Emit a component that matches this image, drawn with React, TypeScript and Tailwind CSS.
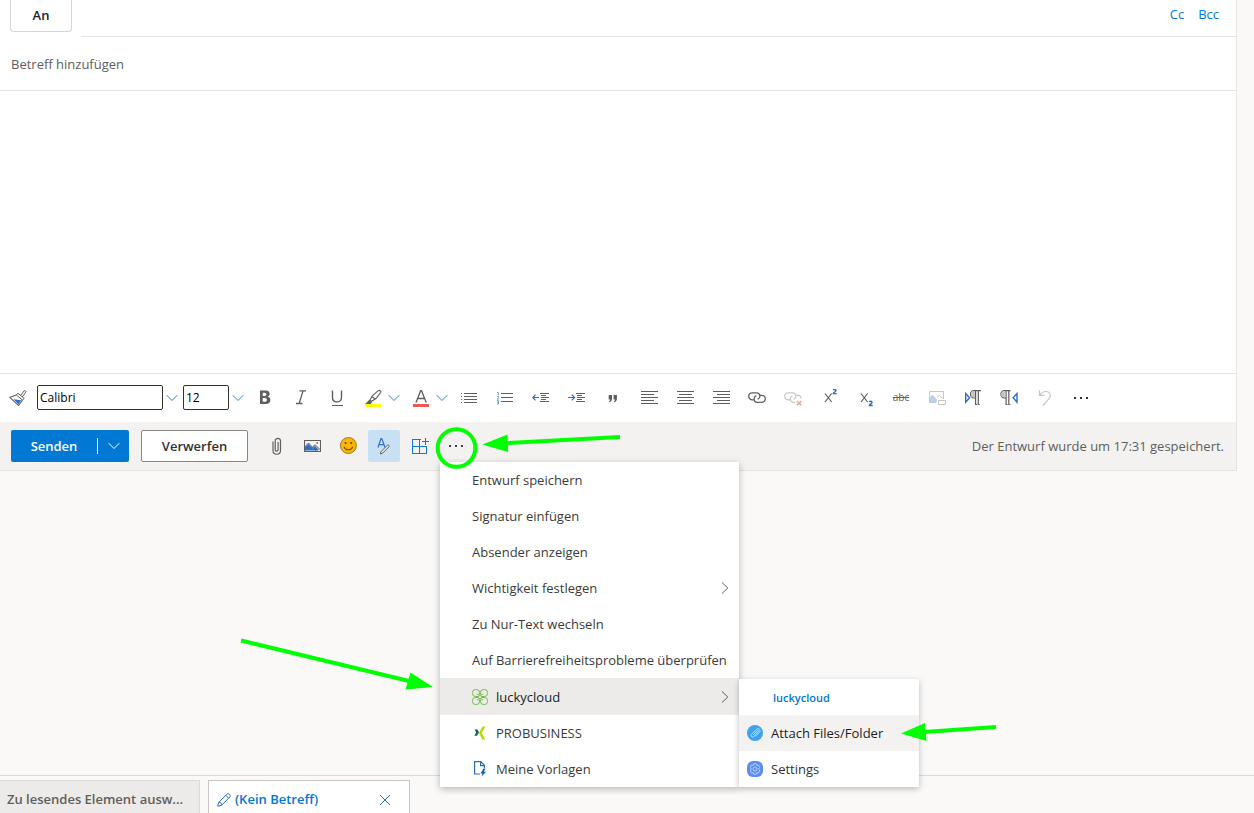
import { ReactNode, useState } from "react";

interface IconProps {
  children: ReactNode;
  size?: string;
  box?: string;
}

function Icon({ children, size = "h-[18px] w-[18px]", box = "0 0 18 18" }: IconProps) {
  return (
    <svg
      viewBox={box}
      className={`${size} shrink-0`}
      fill="none"
      stroke="#605e5c"
      strokeWidth="1"
      aria-hidden="true"
    >
      {children}
    </svg>
  );
}

const blue = "#2b6fc9";

function ChevronDown({ color = "#2b7cd3" }: { color?: string }) {
  return (
    <Icon size="h-3 w-3" box="0 0 12 12">
      <path d="M.7 3.2 6 8.5l5.3-5.3" stroke={color} />
    </Icon>
  );
}

function ChevronRight() {
  return (
    <Icon size="h-3 w-2" box="0 0 8 12">
      <path d="M1 .5 6.8 6 1 11.5" />
    </Icon>
  );
}

function ToolButton({ label, children }: { label: string; children: ReactNode }) {
  return (
    <button
      type="button"
      aria-label={label}
      className="flex h-9 w-9 shrink-0 items-center justify-center hover:bg-[#f3f2f1]"
    >
      {children}
    </button>
  );
}

function SplitTool({ label, children }: { label: string; children: ReactNode }) {
  return (
    <div className="flex w-12 shrink-0 items-center">
      <button type="button" aria-label={label} className="flex h-9 items-center pr-1.5 pl-[9px]">
        {children}
      </button>
      <button type="button" aria-label={`${label}: Optionen`} className="flex h-9 items-center">
        <ChevronDown />
      </button>
    </div>
  );
}

interface ComboProps {
  label: string;
  initial: string;
  width: string;
}

function Combo({ label, initial, width }: ComboProps) {
  const [value, setValue] = useState(initial);
  return (
    <div className="flex shrink-0 items-center">
      <input
        type="text"
        aria-label={label}
        value={value}
        onChange={(e) => setValue(e.target.value)}
        className={`${width} h-[25px] rounded-xs border border-[#323130] px-0.5 text-[12px] text-black outline-none`}
      />
      <button
        type="button"
        aria-label={`${label} auswählen`}
        className="flex h-6 w-5 items-center pl-[3px]"
      >
        <ChevronDown />
      </button>
    </div>
  );
}

const tools: { label: string; icon: ReactNode }[] = [
  {
    label: "Aufzählungszeichen",
    icon: (
      <Icon>
        <path d="M4 4.5h13M4 7.5h13M4 10.5h13M4 13.5h13" shapeRendering="crispEdges" />
        <path d="M1 4.5h1M1 7.5h1M1 10.5h1M1 13.5h1" stroke={blue} shapeRendering="crispEdges" />
      </Icon>
    ),
  },
  {
    label: "Nummerierung",
    icon: (
      <Icon>
        <path d="M5 4.5h12M5 8.5h12M5 12.5h12" shapeRendering="crispEdges" />
        <path
          d="M1 3.5h1.3v3M1 7.5h1.5v1L1 10h2M1 11.5h1.5v3.5H1M1 13.2h1.5"
          stroke="#5b97dc"
          strokeWidth=".9"
        />
      </Icon>
    ),
  },
  {
    label: "Einzug verkleinern",
    icon: (
      <Icon>
        <path d="M8 4.5h9M9 6.5h5M9 8.5h8M9 10.5h5M8 12.5h9" shapeRendering="crispEdges" />
        <path d="M.8 8.5H7M3.5 5.7.8 8.5l2.700 2.800" stroke={blue} strokeWidth="1.2" />
      </Icon>
    ),
  },
  {
    label: "Einzug vergrößern",
    icon: (
      <Icon>
        <path d="M8 4.5h9M9 6.5h5M9 8.5h8M9 10.5h5M8 12.5h9" shapeRendering="crispEdges" />
        <path d="M0 8.5h6.5M3.8 5.7l2.7 2.8-2.7 2.8" stroke={blue} strokeWidth="1.2" />
      </Icon>
    ),
  },
  {
    label: "Zitat",
    icon: (
      <Icon>
        <path
          d="M4.700 6H8v3.400c0 1.900-.9 3.300-2.500 3.800l-.5-1c.8-.3 1.100-.9 1.100-1.800H4.700zM9.600 6h3.300v3.400c0 1.900-.9 3.300-2.500 3.800l-.5-1c.8-.3 1.100-.9 1.100-1.800H9.600z"
          fill="#605e5c"
          stroke="none"
        />
      </Icon>
    ),
  },
  {
    label: "Linksbündig",
    icon: (
      <Icon>
        <path d="M1 2.5h17M1 5.5h13M1 8.5h17M1 11.5h13M1 14.5h17" shapeRendering="crispEdges" />
      </Icon>
    ),
  },
  {
    label: "Zentriert",
    icon: (
      <Icon>
        <path d="M1 2.5h17M3 5.5h13M1 8.5h17M3 11.5h13M1 14.5h17" shapeRendering="crispEdges" />
      </Icon>
    ),
  },
  {
    label: "Rechtsbündig",
    icon: (
      <Icon>
        <path d="M1 2.5h17M5 5.5h13M1 8.5h17M5 11.5h13M1 14.5h17" shapeRendering="crispEdges" />
      </Icon>
    ),
  },
  {
    label: "Link einfügen",
    icon: (
      <Icon>
        <path
          d="M6 10.8H4.2a3.5 3.5 0 0 1 0-7h4.3a3.4 3.4 0 0 1 3.4 3.4c0 1.6-1 2.6-2.3 3.2M12 6.3h1.8a3.5 3.5 0 0 1 0 7H9.5a3.4 3.4 0 0 1-3.4-3.4c0-1.6 1-2.6 2.3-3.2"
          strokeWidth="1.3"
        />
      </Icon>
    ),
  },
  {
    label: "Link entfernen",
    icon: (
      <Icon>
        <path
          d="M6 10.8H4.2a3.5 3.5 0 0 1 0-7h4.3a3.4 3.4 0 0 1 3.4 3.4c0 1.6-1 2.6-2.3 3.2M12 6.3h1.8a3.3 3.3 0 0 1 3.3 3.3M11 13.3H9.5a3.4 3.4 0 0 1-3.4-3.4c0-1.6 1-2.6 2.3-3.2"
          stroke="#c8c6c4"
          strokeWidth="1.2"
        />
        <path d="m13 12 4.3 4.3M17.3 12 13 16.3" stroke="#f0a79e" strokeWidth="1.6" />
      </Icon>
    ),
  },
  {
    label: "Hochgestellt",
    icon: (
      <Icon>
        <path d="m5 4.500 6.600 8.500M11.600 4.500 5 13" strokeWidth="1.2" />
        <path d="M13.300 1.200c.5-1 2.700-1 2.700.400 0 1.200-2.500 1.600-2.700 3h3.400" stroke={blue} strokeWidth="1.4" />
      </Icon>
    ),
  },
  {
    label: "Tiefgestellt",
    icon: (
      <Icon>
        <path d="m5 4.500 6.600 8.500M11.600 4.500 5 13" strokeWidth="1.2" />
        <path
          d="M13.300 13c.5-1 2.700-1 2.700.400 0 1.200-2.500 1.700-2.700 3.100h3.400"
          stroke={blue}
          strokeWidth="1.4"
        />
      </Icon>
    ),
  },
  {
    label: "Durchgestrichen",
    icon: <span className="text-[10px] text-[#605e5c] line-through">abc</span>,
  },
  {
    label: "Alternativtext",
    icon: (
      <Icon>
        <path d="M8 13.5H1.5v-11h14V10" stroke="#c8c6c4" />
        <path d="M2 12V9l2.3-2.8L9 11.3V13H2z" fill="#b4d3f2" stroke="none" />
        <path d="m2 8.7 2.3-2.6 4.4 4.6M9 8.5l2.3-2 3.7 3.3" stroke="#c8c6c4" />
        <path d="M10.5 11.5h7v4h-7z" fill="#fff" stroke="#c8c6c4" />
      </Icon>
    ),
  },
  {
    label: "Links nach rechts",
    icon: (
      <Icon>
        <path d="M1.7 4.5v8.6L5.6 8.8z" stroke={blue} strokeWidth="1.4" />
        <path d="M17 1.6H10a3.6 3.6 0 0 0 0 7.200h1.5M11.6 1.6V15.5h1.5M14.3 1.6V15.5h1.5" strokeWidth="1.2" />
        <path d="M11 2H10a3.2 3.2 0 0 0 0 6.400h1z" fill="#c8c6c4" stroke="none" />
      </Icon>
    ),
  },
  {
    label: "Rechts nach links",
    icon: (
      <Icon>
        <path d="M17 4.5v8.6L13.1 8.8z" stroke={blue} strokeWidth="1.4" />
        <path d="M10.500 1.6H4.5a3.6 3.6 0 0 0 0 7.200H6M6.1 1.6V15.5h1.5M8.8 1.6V15.5h1.5" strokeWidth="1.2" />
        <path d="M5.500 2H4.5a3.2 3.2 0 0 0 0 6.400h1z" fill="#c8c6c4" stroke="none" />
      </Icon>
    ),
  },
  {
    label: "Rückgängig",
    icon: (
      <Icon>
        <path
          d="M3.5 1.5v4.800h5M3.7 6.2C5.8 3.4 8 2.3 10.5 2.5c3.4.3 5 3.8 3 6.700L7 16.5"
          stroke="#c8c6c4"
          strokeWidth="1.2"
        />
      </Icon>
    ),
  },
  {
    label: "Weitere Formatierungsoptionen",
    icon: (
      <Icon>
        <path
          d="M2 8h2v2H2zM8 8h2v2H8zM14 8h2v2h-2z"
          fill="#323130"
          stroke="none"
          shapeRendering="crispEdges"
        />
      </Icon>
    ),
  },
];

function FormatBar() {
  return (
    <div
      role="toolbar"
      aria-label="Formatierung"
      className="flex h-[49px] items-center overflow-hidden border-t border-[#e6e4e2] pb-px"
    >
      <button
        type="button"
        aria-label="Format übertragen"
        className="flex h-9 w-[37px] shrink-0 items-center pl-[9px]"
      >
        <Icon>
          <path d="m11.5 6.5 3.7-4.7c.6-.7 2.3.4 1.7 1.3L13.3 7.9" />
          <path d="m8.8 4.2 6.3 5.2-1.6 1.8-6.2-5.3z" />
          <path d="m7.3 6-6.5 2.3 8.700 8.200 4-5.300" strokeWidth="1.1" />
          <path d="m4.5 10.3 7.700 1-2.700 4z" fill={blue} stroke="none" />
        </Icon>
      </button>
      <Combo label="Schriftart" initial="Calibri" width="w-[126px]" />
      <Combo label="Schriftgrad" initial="12" width="w-[46px]" />
      <div className="-ml-0.5 flex items-center">
        <ToolButton label="Fett">
          <Icon>
            <path
              d="M4 1.500h5.700c2.700 0 4 1.300 4 3.300 0 1.400-.8 2.400-2 2.900 1.700.4 2.700 1.500 2.700 3.200 0 2.500-1.800 4.100-4.700 4.100H4z"
              strokeWidth="0"
              fill="#605e5c"
            />
            <path
              d="M6.700 3.700h1.800c2.600 0 2.600 3.200 0 3.200H6.700zM6.700 9h2.100c2.800 0 2.800 3.800 0 3.800H6.700z"
              fill="#fff"
              stroke="none"
            />
          </Icon>
        </ToolButton>
        <ToolButton label="Kursiv">
          <Icon>
            <path d="M7.500 1.900h6.500M4 14.500h6.500M11 1.900 7.200 14.500" strokeWidth="1.3" />
          </Icon>
        </ToolButton>
        <ToolButton label="Unterstrichen">
          <Icon>
            <path d="M4.500 1.500v7c0 5.800 9 5.800 9 0v-7" strokeWidth="1.4" />
            <path d="M4 16.500h11" shapeRendering="crispEdges" />
          </Icon>
        </ToolButton>
        <SplitTool label="Texthervorhebung">
          <Icon>
            <path d="M1 15h16v3H1z" fill="#ffff00" stroke="none" />
            <path
              d="M14.3 1.7 8.5 6.5 6 11l1.5 1.3L12 9.5l4.8-6.2c.6-1-1.4-2.5-2.5-1.6zM8 7.5l3.5 2.7M6 11l-3.5 3.5h4l1.2-2"
              strokeWidth="1.1"
            />
            <path d="m5.5 11.5-3 3h3.800l1-1.800z" fill="#605e5c" stroke="none" />
          </Icon>
        </SplitTool>
        <SplitTool label="Schriftfarbe">
          <Icon>
            <path d="M1 15h16v3H1z" fill="#ee5a52" stroke="none" />
            <path d="M4 13.5 8.7 1.7h.8l4.700 11.800M5.500 9.500h7.200" strokeWidth="1.3" />
          </Icon>
        </SplitTool>
        {tools.map((tool) => (
          <ToolButton key={tool.label} label={tool.label}>
            {tool.icon}
          </ToolButton>
        ))}
      </div>
    </div>
  );
}

function CloverIcon() {
  return (
    <Icon size="h-4 w-4" box="0 0 16 16">
      <g stroke="#6cbb45" strokeWidth="1">
        <path d="M6 7.500H3.500a3 3 0 0 1-3-3v-1a3 3 0 0 1 3-3h1a3 3 0 0 1 3 3V5c0 1.300-2.300 1.300-2.300-.3M6 7.500c1 0 1.500-.500 1.500-1.500" />
        <path d="M10 7.500h2.500a3 3 0 0 0 3-3v-1a3 3 0 0 0-3-3h-1a3 3 0 0 0-3 3V5c0 1.300 2.300 1.300 2.300-.3M10 7.500c-1 0-1.500-.500-1.500-1.500" />
        <path d="M6 8.500H3.500a3 3 0 0 0-3 3v1a3 3 0 0 0 3 3h1a3 3 0 0 0 3-3V11c0-1.300-2.300-1.300-2.300.3M6 8.500c1 0 1.500.500 1.500 1.500" />
        <path d="M10 8.500h2.500a3 3 0 0 1 3 3v1a3 3 0 0 1-3 3h-1a3 3 0 0 1-3-3V11c0-1.300 2.300-1.300 2.300.3M10 8.500c-1 0-1.500.500-1.500 1.500" />
      </g>
    </Icon>
  );
}

function XingIcon() {
  return (
    <Icon size="h-4 w-4" box="0 0 16 16">
      <path d="M2.600 4.500h2.800L7 7.400 4.900 10.800H2.300l2-3.400z" fill="#006567" stroke="none" />
      <path d="M10.600 1.500h2.800L9.800 8l3.300 6.400h-2.800L7 8z" fill="#b7d900" stroke="none" />
    </Icon>
  );
}

function TemplateIcon() {
  return (
    <Icon size="h-4 w-4" box="0 0 16 16">
      <path d="M8 13H2.600V.7h6.200L12.400 4.300V7M8.600.7V4.600h3.800" stroke="#2b6cb0" strokeWidth="1.2" />
      <path d="m11.500 7.500-3 5h2l-1.200 3.300 4.800-5h-2.300l1.700-3.300z" fill="#1160ad" stroke="none" />
    </Icon>
  );
}

function AttachIcon() {
  return (
    <Icon size="h-4 w-4" box="0 0 16 16">
      <circle cx="8" cy="8" r="8" fill="#3fa2ee" stroke="none" />
      <path
        d="m6.300 9.800 3.900-4c.9-.8 1.900.3 1.100 1.100l-4.400 4.500c-1.700 1.600-3.900-.5-2.300-2.200l4.700-4.700c2.300-2.200 5.100.6 3 2.800l-4.100 4.200"
        stroke="#c9e4fb"
        strokeWidth=".9"
      />
    </Icon>
  );
}

function SettingsIcon() {
  return (
    <Icon size="h-4 w-4" box="0 0 16 16">
      <rect width="16" height="16" rx="6" fill="#5c8df6" stroke="none" />
      <g stroke="#c3d5fd" strokeWidth=".9">
        <path d="M6.700 2.800h2.600l.5 1.500 1.600-.3 1.300 2.200L11.700 8l1 1.800-1.300 2.200-1.600-.3-.5 1.500H6.700l-.5-1.500-1.600.3-1.300-2.200L4.300 8l-1-1.800L4.600 4l1.600.3z" />
        <circle cx="8" cy="8" r="2" />
      </g>
    </Icon>
  );
}

const plainItems = [
  { label: "Entwurf speichern" },
  { label: "Signatur einfügen" },
  { label: "Absender anzeigen" },
  { label: "Wichtigkeit festlegen", submenu: true },
  { label: "Zu Nur-Text wechseln" },
  { label: "Auf Barrierefreiheitsprobleme überprüfen" },
];

const addInItems = [
  { label: "PROBUSINESS", icon: <XingIcon /> },
  { label: "Meine Vorlagen", icon: <TemplateIcon /> },
];

function LuckycloudMenu() {
  return (
    <ul className="absolute top-px left-full w-[180px] bg-white text-[#201f1e] shadow-[0_2px_6px_rgba(0,0,0,0.25)]">
      <li className="flex h-9 items-center pt-0.5 pl-[34px] text-[11px] font-semibold text-[#0078d4]">
        luckycloud
      </li>
      <li>
        <button type="button" className="flex h-9 w-full items-center gap-2 bg-[#f3f2f1] px-2">
          <AttachIcon />
          <span className="pt-0.5">Attach Files/Folder</span>
        </button>
      </li>
      <li>
        <button type="button" className="flex h-9 w-full items-center gap-2 px-2 text-[#323130]">
          <SettingsIcon />
          <span className="pt-0.5">Settings</span>
        </button>
      </li>
    </ul>
  );
}

function MoreMenu() {
  return (
    <ul className="absolute top-full left-0 z-10 w-[299px] bg-white text-[13px] text-[#3b3a39] shadow-[0_2px_7px_rgba(0,0,0,0.28)]">
      {plainItems.map((item) => (
        <li key={item.label}>
          <button
            type="button"
            className="flex h-9 w-full items-center justify-between pr-2.5 pl-8 whitespace-nowrap hover:bg-[#f3f2f1]"
          >
            <span className="pt-0.5">{item.label}</span>
            {item.submenu && <ChevronRight />}
          </button>
        </li>
      ))}
      <li className="relative">
        <button
          type="button"
          aria-expanded="true"
          className="flex h-[37px] w-full items-center gap-2 bg-[#edebe9] pr-2.5 pl-8 text-[#201f1e]"
        >
          <CloverIcon />
          <span className="flex-1 pt-0.5 text-left">luckycloud</span>
          <ChevronRight />
        </button>
        <LuckycloudMenu />
      </li>
      {addInItems.map((item) => (
        <li key={item.label}>
          <button
            type="button"
            className="flex h-9 w-full items-center gap-2 pr-2.5 pl-8 hover:bg-[#f3f2f1]"
          >
            {item.icon}
            <span className="pt-0.5">{item.label}</span>
          </button>
        </li>
      ))}
    </ul>
  );
}

const square = "flex h-8 w-8 shrink-0 items-center justify-center";

function SendBar() {
  return (
    <div className="flex h-12 items-center bg-[#f3f2f1] pr-3 pl-[11px]">
      <div className="flex h-8 items-center rounded-xs bg-[#0078d4] font-semibold text-white">
        <button type="button" className="h-8 w-[86px] pt-0.5">
          Senden
        </button>
        <span className="h-4 w-px bg-white" />
        <button
          type="button"
          aria-label="Sendeoptionen"
          className="flex h-8 w-[31px] items-center justify-center"
        >
          <ChevronDown color="#fff" />
        </button>
      </div>
      <button
        type="button"
        className="ml-3 h-8 w-[107px] rounded-xs border border-[#8a8886] bg-white pt-0.5 font-semibold text-[#323130]"
      >
        Verwerfen
      </button>
      <div className="ml-3 flex gap-1">
        <button type="button" aria-label="Anfügen" className={square}>
          <Icon>
            <path
              d="M6 4.500v9c0 5 7.500 5 7.500 0V4c0-3.600-5.300-3.600-5.300 0v8.800c0 1.700 2.900 1.700 2.900 0V5"
              strokeWidth="1.2"
            />
          </Icon>
        </button>
        <button type="button" aria-label="Bild einfügen" className={square}>
          <Icon>
            <path d="M2 13.500V10l3.500-3 6.500 6.500z" fill={blue} stroke="none" />
            <path d="m12 13.500-2-3.500 2-1 3.500 3.500v1z" fill={blue} stroke="none" />
            <path d="M1.500 3.500h16v11h-16z" shapeRendering="crispEdges" />
            <path d="m1.500 10 4-4L13 14M9.500 10l2.500-2.200 5 4.700" />
            <path d="M13.500 6h1.500" strokeWidth="1.3" />
          </Icon>
        </button>
        <button type="button" aria-label="Emoji einfügen" className={square}>
          <Icon>
            <circle cx="9.400" cy="8.500" r="8" fill="#fcb400" stroke="#a17a2a" />
            <circle cx="6.600" cy="6" r="1.100" fill="#5f4b1d" stroke="none" />
            <circle cx="12.200" cy="6" r="1.100" fill="#5f4b1d" stroke="none" />
            <path d="M5 9.800c1.500 4 7.300 4 8.800 0" stroke="#6f571d" strokeWidth="1.1" />
          </Icon>
        </button>
        <button
          type="button"
          aria-label="Formatierungsoptionen"
          aria-pressed="true"
          className={`${square} rounded-xs bg-[#c7e0f4]`}
        >
          <Icon>
            <path d="M3 10.500 6 1.500h.7l3.300 9M4 7.700h5" stroke={blue} strokeWidth="1.2" />
            <path d="m5.300 17 .8-2.500 6.400-6.300c.8-.7 2.300.7 1.500 1.500l-6.300 6.400z" fill="#e8eef3" />
          </Icon>
        </button>
        <button type="button" aria-label="Apps" className={square}>
          <Icon>
            <g stroke="#0f78d4" shapeRendering="crispEdges">
              <path d="M9.500 2.500h-8v14h14v-7h-14M8.500 2.500v14M11 4.500h7M14.500 1v7" />
            </g>
          </Icon>
        </button>
        <div className="relative">
          <button type="button" aria-label="Weitere Optionen" aria-expanded="true" className={square}>
            <Icon>
              <path
                d="M2 8h2v2H2zM8 8h2v2H8zM14 8h2v2h-2z"
                fill="#3b3a4e"
                stroke="none"
                shapeRendering="crispEdges"
              />
            </Icon>
          </button>
          <MoreMenu />
        </div>
      </div>
      <p className="ml-auto pt-0.5 text-[#605e5c]">Der Entwurf wurde um 17:31 gespeichert.</p>
    </div>
  );
}

// Markers that point out the click path through the menus.
function Markers() {
  return (
    <svg
      className="pointer-events-none absolute top-0 left-0 z-20 h-[813px] w-[1254px]"
      viewBox="0 0 1254 813"
      fill="#00ff00"
      stroke="#00ff00"
      strokeWidth="4"
      aria-hidden="true"
    >
      <circle cx="456.500" cy="448" r="18.800" fill="none" />
      <path d="M620 437 506 443M241 640.500l168 40.500M996 727l-72 5" />
      <path
        d="m482.500 444.500 25-10 .5 17.500zM433 687l-22.500-14.500-5 17zM901 733.500l24-10.500 1.500 18z"
        stroke="none"
      />
    </svg>
  );
}

export default function App() {
  const [subject, setSubject] = useState("");

  return (
    <div className="relative flex min-h-screen flex-col overflow-hidden bg-[#faf9f8] font-['Open_Sans','Noto_Sans',sans-serif] text-[13px] text-[#323130]">
      <main className="mr-[17px] border-r border-b border-[#e6e4e2] bg-white">
        <div className="flex h-[37px] items-start pl-2.5">
          <button
            type="button"
            className="h-8 w-[62px] rounded-b-sm border border-t-0 border-[#d8d6d4] font-semibold text-[#201f1e]"
          >
            An
          </button>
          <div className="ml-[9px] flex h-[37px] flex-1 items-start justify-end gap-3.5 border-b border-[#e6e4e2] pt-[5px] pr-[17px] text-[#0078d4]">
            <button type="button">Cc</button>
            <button type="button">Bcc</button>
          </div>
        </div>
        <input
          type="text"
          aria-label="Betreff"
          placeholder="Betreff hinzufügen"
          value={subject}
          onChange={(e) => setSubject(e.target.value)}
          className="block h-[54px] w-full border-b border-[#e6e4e2] px-[11px] outline-none placeholder:text-[#605e5c]"
        />
        <textarea
          aria-label="Nachrichtentext"
          className="block h-[282px] w-full resize-none p-3 outline-none"
        />
        <FormatBar />
        <SendBar />
      </main>

      <footer className="mt-auto flex h-[38px] items-end gap-2 border-t border-[#dddbd9] font-semibold">
        <button
          type="button"
          className="h-[33px] w-[200px] border border-b-0 border-l-0 border-[#dddbd9] bg-[#edebe9] pt-1.5 pl-[7px] text-left whitespace-nowrap text-[#605e5c]"
        >
          Zu lesendes Element ausw...
        </button>
        <div className="flex h-[33px] w-[202px] items-center border border-b-0 border-[#c8c6c4] bg-white pt-1.5 pr-[18px] pl-2 text-[#0078d4]">
          <button type="button" className="flex flex-1 items-center gap-1">
            <Icon size="h-3.5 w-3.5" box="0 0 14 14">
              <path
                d="m.7 13.3 1.100-4L10 1.100c1.500-1.500 4.300 1.200 2.900 2.800L4.700 12.200zM8.800 2.300l2.900 2.900M1.800 9.300c1.800 0 2.900 1.100 2.900 2.900"
                stroke={blue}
              />
            </Icon>
            (Kein Betreff)
          </button>
          <button type="button" aria-label="Schließen">
            <Icon size="h-3 w-3" box="0 0 12 12">
              <path d="m1 1 10 10M11 1 1 11" stroke={blue} />
            </Icon>
          </button>
        </div>
      </footer>
      <Markers />
    </div>
  );
}
